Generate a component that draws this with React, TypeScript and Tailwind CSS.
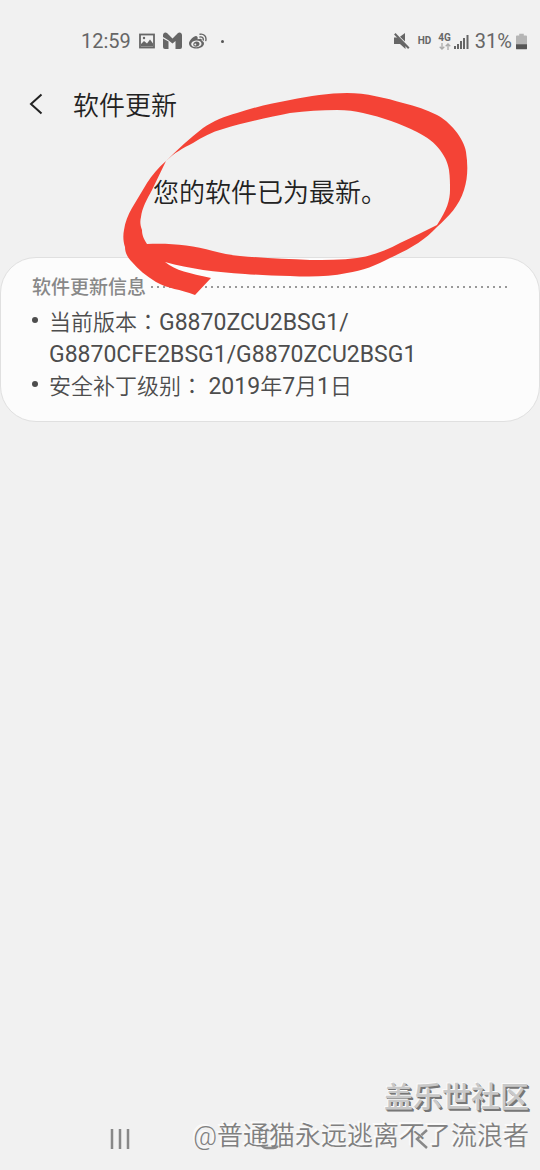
import type { ReactNode } from 'react';

function StatusBar() {
  return (
    <div className="flex h-16 items-center justify-between pl-[81px] pr-[13px] pt-[18px] text-[20px] leading-6 text-[#666666]">
      <div className="flex items-center">
        <span className="w-[58px]">12:59</span>
        <svg className="h-4 w-4" viewBox="0 0 16 16" fill="none">
          <rect x="1" y="1.5" width="14" height="13" stroke="currentColor" strokeWidth="1.8" />
          <path d="M2 13.500V11l3-3 3 2.500 3-4 3 4v3H2z" fill="currentColor" />
          <circle cx="5" cy="5" r="1.200" fill="currentColor" />
        </svg>
        <svg className="ml-2 h-[18px] w-[19px]" viewBox="0 0 19 18" fill="currentColor">
          <path d="M0 6.500 5.500 9.500V17H2a2 2 0 0 1-2-2z" />
          <path d="M0 5V3a2.500 2.500 0 0 1 4-2l5.500 5.500L15 1a2.500 2.500 0 0 1 4 2v12a2 2 0 0 1-2 2h-4.500V9l-3 2.500L5 8z" />
        </svg>
        <svg className="ml-[7px] h-[18px] w-[18px]" viewBox="0 0 18 18" fill="currentColor">
          <path
            fillRule="evenodd"
            d="M7.200 4C5.500 3.500 0 8 0 11.500 0 14.500 3.500 16.500 7.500 16.500c4.500 0 7.500-2.500 7.500-5 0-1.500-1-2.300-2.300-2.700.6-2-.8-2.800-4.200-1.500.5-1.500.2-2.700-1.300-3.300zM7 8.500c3-.3 5.300 1 5.500 3s-2 3.500-4.800 3.800c-3 .2-5.400-1.100-5.500-3C2 10.300 4.200 8.800 7 8.500z"
          />
          <path
            fillRule="evenodd"
            d="M7.500 9.500c2 0 3.300 1.200 3 2.800-.3 1.500-1.800 2.500-3.500 2.500-1.900 0-3-1.200-2.700-2.700.3-1.600 1.700-2.600 3.200-2.600zM6.300 11.600a1 1 0 1 0 0 2 1 1 0 0 0 0-2z"
          />
          <path d="M11 5c2-.5 3.600 1 3.200 3M11 2.200c3.500-.7 6.800 2.300 5.800 6.300" fill="none" stroke="currentColor" strokeWidth="1.400" strokeLinecap="round" />
        </svg>
        <span className="ml-[14px] h-[3px] w-[3px] rounded-full bg-[#555555]" />
      </div>

      <div className="flex items-center">
        <svg className="h-4 w-4" viewBox="0 0 16 16" fill="currentColor">
          <path d="M0 4.500h3.500L11.500 12v4L6 11H0z" />
          <path d="M6 3.800 11 0v8.500z" />
          <path d="M.8.8l14 14.400" stroke="currentColor" strokeWidth="2" />
        </svg>
        <span className="ml-2 text-[10px] font-bold leading-3">HD</span>
        <span className="ml-[7px] flex flex-col items-center text-[10px] font-bold leading-[9px]">
          4G
          <svg className="mt-px h-[7px] w-3" viewBox="0 0 12 7" fill="none" stroke="#aaaaaa" strokeWidth="1.300">
            <path d="M3 0v6M.7 3.700 3 6l2.300-2.300M9 7V1M6.700 3.300 9 1l2.300 2.300" />
          </svg>
        </span>
        <svg className="ml-[3px] h-[15px] w-[15px]" viewBox="0 0 15 15" fill="currentColor">
          <path d="M0 12h2v3H0zM3 10h2v5H3zM6 7h2v8H6zM9 4h2v11H9zM12.500 1h2v14h-2z" />
        </svg>
        <span className="ml-[6px]">31%</span>
        <svg className="ml-1 h-[17px] w-[11px]" viewBox="0 0 12 17">
          <path d="M3.500 0h5v2H11a1 1 0 0 1 1 1v9H0V3a1 1 0 0 1 1-1h2.500z" fill="#b5b5b5" />
          <path d="M0 11.500h12V16a1 1 0 0 1-1 1H1a1 1 0 0 1-1-1z" fill="#555555" />
        </svg>
      </div>
    </div>
  );
}

function InfoItem({ label, children }: { label: string; children: ReactNode }) {
  return (
    <li className="flex">
      <span className="mt-[10px] mr-[11px] h-[6px] w-[6px] shrink-0 rounded-full bg-[#4d4d4d]" />
      <p>
        {label}
        <span className="font-['Noto_Sans_CJK_TC',sans-serif] leading-none">：</span>
        {children}
      </p>
    </li>
  );
}

// Roboto runs a little larger than the Chinese text beside it
function Latin({ children }: { children: ReactNode }) {
  return <span className="text-[23px] font-normal">{children}</span>;
}

// Hand-drawn red circle around the status message
function MarkerCircle() {
  return (
    <svg
      className="pointer-events-none absolute left-[122px] top-[92px] h-[204px] w-[346px]"
      viewBox="122 92 346 204"
      aria-hidden="true"
    >
      <path
        fill="#f44336"
        fillRule="evenodd"
        d="M290 100C310 96 329 93 347 93C366 93 386 98 403 103C416 106 427 110 437 115C449 121 464 138 466 152C468 165 468 178 464 190C459 206 449 216 437 227C425 240 410 249 390 258C377 265 362 271 347 273C328 277 309 277 290 276C274 276 259 275 245 274C215 272 190 269 165 262C176 271 189 273 211 278L195 295C180 289 168 289 156 282C146 276 138 269 132 262C127 257 125 252 125 247C123 241 123 235 124 230C125 222 128 215 132 208L147 183C152 175 158 168 166 161C178 149 190 138 203 128C213 121 225 116 237 113C255 107 273 103 290 100ZM290 113C271 117 245 122 223 129C212 132 202 137 193 143C183 148 174 153 166 161L152 190C147 199 142 208 141 217C140 221 140 225 142 230C142 234 143 238 147 244C170 243 192 245 213 251C221 253 230 255 240 256C263 258 286 259 310 260C325 260 342 260 357 258C372 256 387 250 400 243C413 237 425 231 437 225C447 210 450 200 450 190C450 184 450 177 449 170C448 164 446 158 440 150C435 143 427 137 417 132C401 124 382 117 363 113C355 111 347 110 337 110C321 110 306 111 290 113Z"
      />
    </svg>
  );
}

function NavBar() {
  return (
    <nav className="mt-auto grid h-[62px] grid-cols-[1fr_60px_1fr] items-center px-[90px] text-[#888888]">
      <button aria-label="最近" className="justify-self-start px-5">
        <svg className="h-[22px] w-5" viewBox="0 0 20 22" fill="none" stroke="currentColor" strokeWidth="2.500">
          <path d="M2 1v20M10 1v20M18 1v20" />
        </svg>
      </button>
      <button aria-label="主屏幕" className="justify-self-center">
        <svg className="h-[22px] w-[22px]" viewBox="0 0 22 22" fill="none" stroke="currentColor" strokeWidth="2.500">
          <rect x="2" y="2" width="18" height="18" rx="5.500" />
        </svg>
      </button>
      <button aria-label="返回" className="justify-self-end px-5">
        <svg className="h-[22px] w-4" viewBox="0 0 16 22" fill="none" stroke="currentColor" strokeWidth="2.500">
          <path d="m13 2-10 9 10 9" />
        </svg>
      </button>
    </nav>
  );
}

export default function App() {
  return (
    <div className="relative flex min-h-screen flex-col bg-[#f1f1f1] font-[Roboto,'Noto_Sans_CJK_SC',sans-serif]">
      <StatusBar />

      <header className="flex h-20 items-center pl-7">
        <button aria-label="返回" className="mr-[29px]">
          <svg className="h-6 w-4" viewBox="0 0 16 24" fill="none" stroke="#222222" strokeWidth="2">
            <path d="M13.500 2.500 3 12l10.500 9.500" />
          </svg>
        </button>
        <h1 className="pt-1 text-[26px] font-[350] leading-8 text-[#222222]">软件更新</h1>
      </header>

      <p className="pb-12 pt-[33px] text-center text-[26px] font-[350] leading-8 text-[#222222]">您的软件已为最新。</p>

      <section className="rounded-[36px] border border-[#e0e0e0] bg-[#fcfcfc] px-[31px] pb-[18px] pt-4">
        <div className="flex items-center gap-[5px]">
          <h2 className="pt-[2px] text-[19px] font-medium leading-6 text-[#888888]">软件更新信息</h2>
          <svg className="h-[2px] min-w-0 flex-1" aria-hidden="true">
            <line x1="0" y1="1" x2="100%" y2="1" stroke="#999999" strokeWidth="2" strokeDasharray="2 4" />
          </svg>
        </div>
        <ul className="mt-[7px] text-[22px] font-[350] leading-8 text-[#4d4d4d]">
          <InfoItem label="当前版本">
            <Latin>
              G8870ZCU2BSG1/
              <br />
              G8870CFE2BSG1/G8870ZCU2BSG1
            </Latin>
          </InfoItem>
          <InfoItem label="安全补丁级别">
            {' '}
            <Latin>2019</Latin>年<Latin>7</Latin>月<Latin>1</Latin>日
          </InfoItem>
        </ul>
      </section>

      <NavBar />
      <MarkerCircle />

      <div className="pointer-events-none absolute bottom-[14px] right-[11px] text-right">
        <p className="text-[29px] font-medium leading-9 text-[#c8c8c8] [text-shadow:-1px_-1px_0_#fafafa,1px_1px_0_#777777,2px_2px_0_#777777]">
          盖乐世社区
        </p>
        <p className="text-[26px] font-[350] leading-10 text-[#808080] [text-shadow:-1px_-1px_0_#fafafa,-2px_-2px_0_#fafafa]">
          @普通猫永远逃离不了流浪者
        </p>
      </div>
    </div>
  );
}
